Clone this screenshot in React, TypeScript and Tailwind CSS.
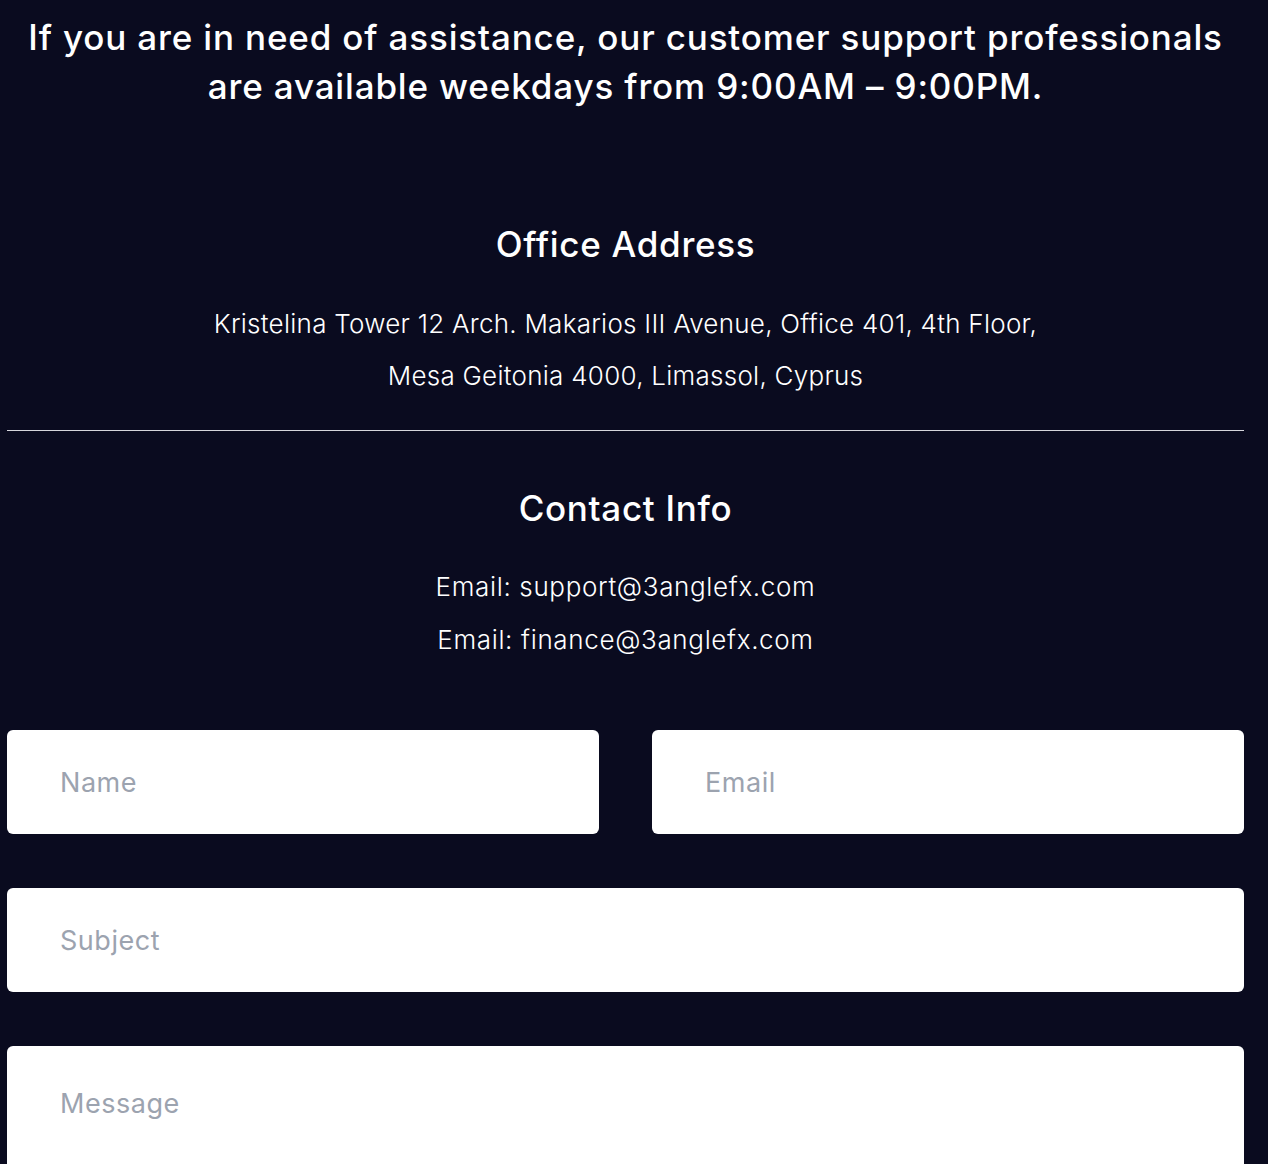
import React from 'react';

const font = { fontFamily: 'Inter, "Noto Sans", sans-serif' };

const fieldClass =
  'h-[104px] rounded-[6px] bg-white pl-[53px] text-[27px] tracking-[0.02em] text-gray-700 placeholder:text-[#9ca3af] outline-none';

const App: React.FC = () => {
  return (
    <div className="min-h-screen bg-[#0a0b1f] text-white" style={font}>
      <div className="ml-[7px] w-[1237px] pt-[13px] pb-16">
        <h2 className="text-center text-[35px] leading-[49px] font-medium tracking-[0.024em]">
          If you are in need of assistance, our customer support professionals
          <br />
          are available weekdays from 9:00AM – 9:00PM.
        </h2>

        <section className="mt-[111px] text-center">
          <h3 className="text-[35px] leading-[44px] font-medium tracking-[0.02em]">Office Address</h3>
          <p className="mt-[32px] text-[26px] leading-[52px] font-light tracking-[0.01em]">
            Kristelina Tower 12 Arch. Makarios III Avenue, Office 401, 4th Floor,
            <br />
            Mesa Geitonia 4000, Limassol, Cyprus
          </p>
        </section>

        <hr className="mt-[28px] border-0 border-t border-[#d6d6dc]" />

        <section className="mt-[55px] text-center">
          <h3 className="text-[35px] leading-[44px] font-medium tracking-[0.02em]">Contact Info</h3>
          <div className="mt-[30px] text-[26px] leading-[53px] font-light tracking-[0.025em]">
            <p>Email: support@3anglefx.com</p>
            <p>Email: finance@3anglefx.com</p>
          </div>
        </section>

        <form className="mt-[64px] flex flex-col gap-[54px]">
          <div className="grid grid-cols-2 gap-[53px]">
            <input type="text" placeholder="Name" className={fieldClass} />
            <input type="email" placeholder="Email" className={fieldClass} />
          </div>
          <input type="text" placeholder="Subject" className={fieldClass} />
          <textarea
            placeholder="Message"
            className="h-[260px] resize-none rounded-[6px] bg-white pl-[53px] pt-[38px] text-[27px] tracking-[0.02em] text-gray-700 placeholder:text-[#9ca3af] outline-none"
          />
        </form>
      </div>
    </div>
  );
};

export default App;
